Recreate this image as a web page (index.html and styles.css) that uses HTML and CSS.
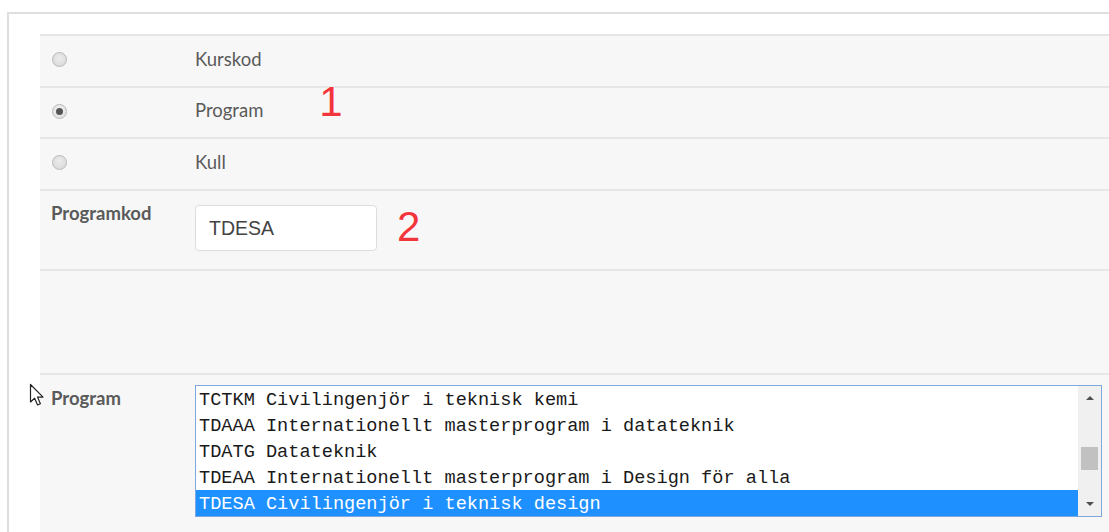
FILE: index.html
```html
<!DOCTYPE html>
<html lang="sv">
<head>
<meta charset="utf-8">
<title>Urval</title>
<link rel="stylesheet" href="styles.css">
</head>
<body>
<div class="card">
  <div class="panel">
    <div class="row choice">
      <div class="cell-radio"><span class="radio"></span></div>
      <div class="choice-label">Kurskod</div>
    </div>
    <div class="row choice mid">
      <div class="cell-radio"><span class="radio checked"></span></div>
      <div class="choice-label">Program <span class="marker one">1</span></div>
    </div>
    <div class="row choice">
      <div class="cell-radio"><span class="radio"></span></div>
      <div class="choice-label">Kull</div>
    </div>
    <div class="row field code">
      <div class="field-label">Programkod</div>
      <div class="field-value">
        <div class="text-input">TDESA</div>
        <span class="marker two">2</span>
      </div>
    </div>
    <div class="row spacer"></div>
    <div class="row field list-row">
      <svg class="pointer" width="16" height="24" viewBox="0 0 16 24"><path d="M1.5 1.5 L1.5 19 L5.6 15.2 L8.6 22 L11.4 20.8 L8.5 14.1 L14 14.1 Z" fill="#fff" stroke="#222" stroke-width="1.2" stroke-linejoin="round"/></svg>
      <div class="field-label">Program</div>
      <div class="field-value">
        <div class="listbox">
          <div class="options">
            <div class="option">TCTKM Civilingenjör i teknisk kemi</div>
            <div class="option">TDAAA Internationellt masterprogram i datateknik</div>
            <div class="option">TDATG Datateknik</div>
            <div class="option">TDEAA Internationellt masterprogram i Design för alla</div>
            <div class="option selected">TDESA Civilingenjör i teknisk design</div>
          </div>
          <div class="scrollbar">
            <span class="arrow up"></span>
            <span class="track"><span class="thumb"></span></span>
            <span class="arrow down"></span>
          </div>
        </div>
      </div>
    </div>
  </div>
</div>
</body>
</html>
```

FILE: styles.css
```css
html, body {
  margin: 0;
  background: #fff;
  overflow: hidden;
}

body {
  box-sizing: border-box;
  padding: 12px 0 0 7px;
  height: 532px;
  font-family: Lato, "Open Sans", sans-serif;
  color: #5a5a5a;
}

.card {
  box-sizing: border-box;
  height: 100%;
  border-top: 2px solid #dedede;
  border-left: 2px solid #dedede;
  padding: 20px 0 0 31px;
  overflow: hidden;
}

.panel {
  background: #f7f7f7;
  position: relative;
  height: 100%;
}

.row {
  display: grid;
  grid-template-columns: 155px 1fr;
  border-top: 2px solid #e6e6e6;
}

.choice {
  height: 50px;
  align-items: center;
}

.choice.mid {
  height: 49px;
}

.cell-radio {
  padding-left: 12px;
  display: flex;
  align-items: center;
  margin-top: -3px;
}

.radio {
  width: 15px;
  height: 15px;
  border-radius: 50%;
  border: 1px solid #b9b9b9;
  background: radial-gradient(circle at 50% 40%, #ececec, #d6d6d6);
  box-sizing: border-box;
  display: flex;
  align-items: center;
  justify-content: center;
}

.radio.checked {
  background: radial-gradient(circle at 50% 40%, #f4f4f4, #dcdcdc);
}

.radio.checked::after {
  content: "";
  width: 7px;
  height: 7px;
  border-radius: 50%;
  background: #555;
}

.choice-label {
  font-size: 18.5px;
  margin-top: -5px;
  display: flex;
  align-items: center;
}

.marker {
  color: #f2353b;
  font-family: "Liberation Sans", Arial, sans-serif;
  font-size: 42px;
  line-height: 1;
  text-shadow: 0 0 2px #fff, 0 0 2px #fff;
}

.marker.one {
  margin-left: 56px;
  margin-top: -16px;
}

.field {
  align-items: start;
}

.field-label {
  padding: 11px 0 0 11px;
  font-weight: 700;
  font-size: 18.5px;
  color: #5a5a5a;
}

.code {
  height: 78px;
}

.code .field-value {
  padding-top: 14px;
  display: flex;
  align-items: center;
}

.text-input {
  width: 182px;
  height: 46px;
  box-sizing: border-box;
  background: #fff;
  border: 1px solid #dcdcdc;
  border-radius: 4px;
  padding: 0 13px;
  display: flex;
  align-items: center;
  font-family: "Liberation Sans", Arial, sans-serif;
  font-size: 19.5px;
  color: #444;
}

.marker.two {
  margin-left: 20px;
  margin-top: -3px;
}

.spacer {
  height: 102px;
}

.list-row {
  position: relative;
  height: 200px;
}

.list-row .field-label {
  padding-top: 12px;
}

.list-row .field-value {
  padding: 10px 7px 0 0;
}

.pointer {
  position: absolute;
  left: -11px;
  top: 8px;
}

.listbox {
  display: flex;
  border: 1px solid #7fa8de;
  background: #fff;
  height: 130px;
}

.options {
  flex: 1;
}

.option {
  height: 26px;
  line-height: 30px;
  overflow: hidden;
  padding-left: 3px;
  font-family: "Liberation Mono", "DejaVu Sans Mono", monospace;
  font-size: 18.6px;
  color: #1a1a1a;
  white-space: nowrap;
}

.option.selected {
  background: #1e90ff;
  color: #fff;
}

.scrollbar {
  width: 23px;
  background: #f0f0f0;
  display: flex;
  flex-direction: column;
  align-items: center;
}

.arrow {
  width: 0;
  height: 0;
  border-left: 4px solid transparent;
  border-right: 4px solid transparent;
  margin: 10px 0;
}

.arrow.up {
  border-bottom: 4px solid #505050;
}

.arrow.down {
  border-top: 4px solid #505050;
}

.track {
  flex: 1;
  width: 100%;
  display: flex;
  justify-content: center;
}

.thumb {
  width: 17px;
  height: 23px;
  margin-top: 37px;
  background: #c1c1c1;
}
```
